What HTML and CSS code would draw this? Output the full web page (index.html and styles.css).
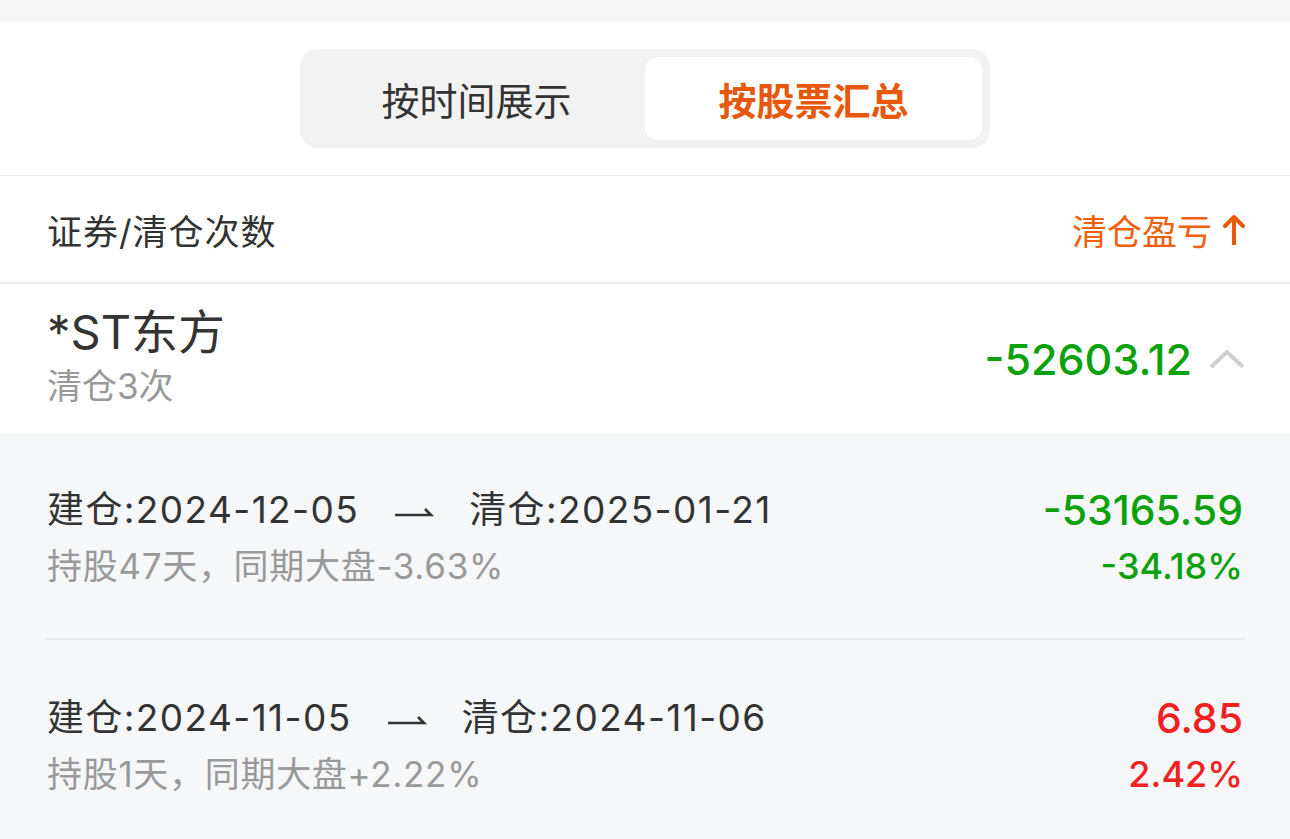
FILE: index.html
```html
<!DOCTYPE html>
<html lang="zh-CN">
<head>
<meta charset="utf-8">
<title>清仓记录</title>
<link rel="stylesheet" href="styles.css">
</head>
<body>
<div class="topbar"></div>
<div class="seg-wrap">
  <div class="seg">
    <div class="tab">按时间展示</div>
    <div class="tab active">按股票汇总</div>
  </div>
</div>
<div class="head-row">
  <div class="head-left">证券/清仓次数</div>
  <div class="head-right">清仓盈亏
    <svg class="up-arrow" width="24" height="32" viewBox="0 0 24 32"><path d="M12 31V4M3 13L12 4l9 9" fill="none" stroke="#e8590c" stroke-width="4" stroke-linecap="round" stroke-linejoin="round"/></svg>
  </div>
</div>
<div class="stock-row">
  <div class="stock-info">
    <div class="stock-name">*ST东方</div>
    <div class="stock-count">清仓3次</div>
  </div>
  <div class="stock-right">
    <span class="stock-pl green">-52603.12</span>
    <svg class="chevron" width="38" height="22" viewBox="0 0 38 22"><path d="M3 19L19 4l16 15" fill="none" stroke="#cfcfcf" stroke-width="4"/></svg>
  </div>
</div>
<div class="details">
  <div class="trade">
    <div class="trade-left">
      <div class="trade-dates"><span>建仓:2024-12-05</span><svg class="harpoon" width="42" height="12" viewBox="0 0 42 12"><path d="M2 9H38L32 3" fill="none" stroke="#333" stroke-width="2.6"/></svg><span>清仓:2025-01-21</span></div>
      <div class="trade-sub">持股47天，同期大盘-3.63%</div>
    </div>
    <div class="trade-right">
      <div class="trade-pl green">-53165.59</div>
      <div class="trade-pct green">-34.18%</div>
    </div>
  </div>
  <div class="trade">
    <div class="trade-left">
      <div class="trade-dates"><span>建仓:2024-11-05</span><svg class="harpoon" width="42" height="12" viewBox="0 0 42 12"><path d="M2 9H38L32 3" fill="none" stroke="#333" stroke-width="2.6"/></svg><span>清仓:2024-11-06</span></div>
      <div class="trade-sub">持股1天，同期大盘+2.22%</div>
    </div>
    <div class="trade-right">
      <div class="trade-pl red">6.85</div>
      <div class="trade-pct red">2.42%</div>
    </div>
  </div>
</div>
</body>
</html>
```
FILE: styles.css
```css
* { box-sizing: border-box; }
html, body { margin: 0; padding: 0; }
body {
  width: 1290px;
  height: 839px;
  overflow: hidden;
  background: #f6f7f9;
  font-family: Inter, "Noto Sans CJK SC", sans-serif;
  color: #333;
}
.topbar { height: 22px; background: #f7f7f7; }
.seg-wrap {
  background: #fff;
  padding: 27px 0;
  border-bottom: 1px solid #ededed;
  display: flex;
  justify-content: center;
}
.seg {
  width: 690px;
  height: 99px;
  background: #f2f2f2;
  border-radius: 18px;
  padding: 8px;
  display: flex;
}
.tab {
  flex: 1;
  display: flex;
  align-items: center;
  justify-content: center;
  font-size: 38px;
  color: #333;
  border-radius: 13px;
}
.tab.active {
  background: #fff;
  color: #e8580c;
  font-weight: bold;
}
.head-row {
  height: 108px;
  background: #fff;
  border-bottom: 2px solid #ebebeb;
  display: flex;
  align-items: center;
  justify-content: space-between;
  padding: 0 44px 0 47px;
}
.head-left { font-size: 35px; color: #333; letter-spacing: 1px; }
.head-right {
  font-size: 35px;
  color: #ef5f0c;
  display: flex;
  align-items: center;
  gap: 10px;
}
.up-arrow { display: block; }
.stock-row {
  height: 149px;
  background: #fff;
  display: flex;
  align-items: center;
  justify-content: space-between;
  padding: 0 44px 0 47px;
}
.stock-name { font-size: 47px; color: #333; line-height: 55px; }
.stock-count { font-size: 35px; color: #999; line-height: 55px; }
.stock-right { display: flex; align-items: center; gap: 16px; }
.stock-pl { font-size: 43px; font-weight: 500; }
.chevron { display: block; }
.green { color: #0aa10c; }
.red { color: #f0211f; }
.trade {
  height: 207px;
  display: flex;
  align-items: center;
  justify-content: space-between;
  margin: 0 45px;
  border-bottom: 2px solid #e9eaec;
  padding: 5px 2px 0;
}
.trade:last-child { border-bottom: none; }
.trade-dates {
  font-size: 37px;
  color: #333;
  display: flex;
  align-items: center;
  gap: 34px;
  line-height: 56px;
  letter-spacing: 1.4px;
}
.harpoon { display: block; margin-top: 4px; }
.trade-sub { font-size: 35px; color: #999; line-height: 56px; letter-spacing: 0.7px; }
.trade-right { text-align: right; }
.trade-pl { font-size: 41px; line-height: 56px; font-weight: 500; }
.trade-pct { font-size: 36px; line-height: 56px; font-weight: 500; }
```
